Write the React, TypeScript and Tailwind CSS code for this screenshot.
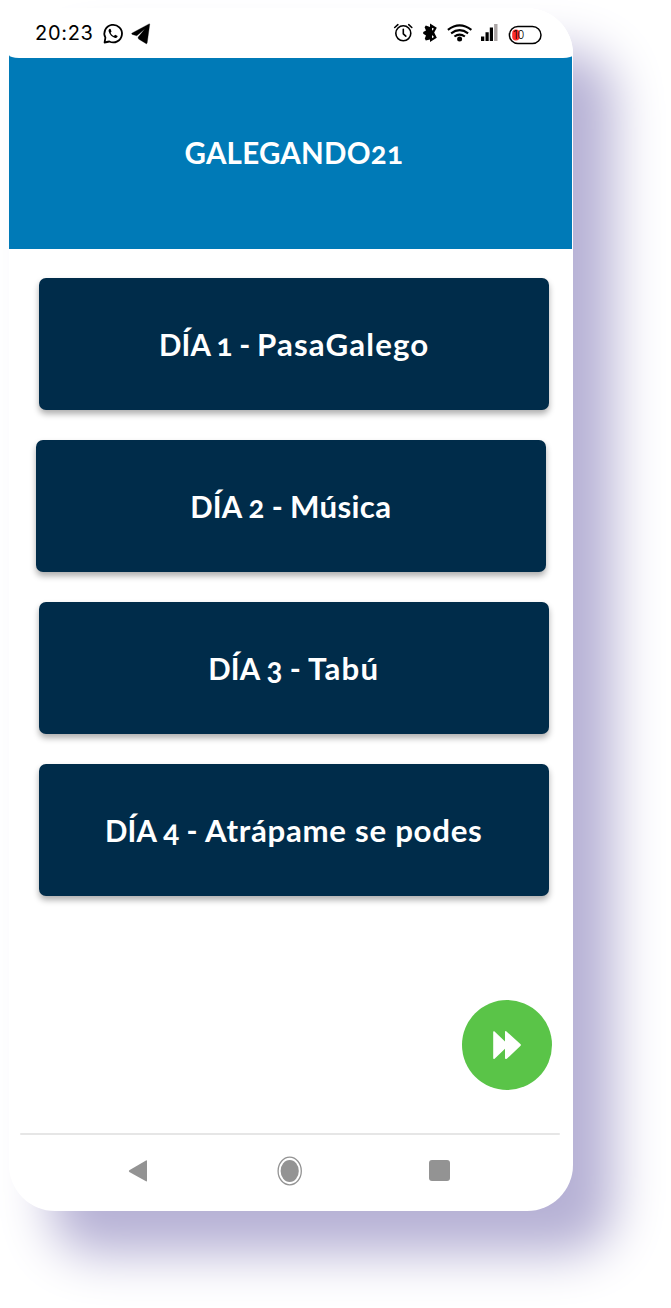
import React from "react";

const days = [
  { prefix: "DÍA 1 -", title: "PasaGalego", place: "ml-[30px] pl-[120px]", prefixWidth: "w-[97.5px] [word-spacing:-0.7px]", spacing: "tracking-[1.05px]" },
  { prefix: "DÍA 2 -", title: "Música", place: "ml-[27px] pl-[154.3px]", prefixWidth: "w-[100px]", spacing: "tracking-[0.3px]" },
  { prefix: "DÍA 3 -", title: "Tabú", place: "ml-[30px] pl-[169.3px]", prefixWidth: "w-[99.5px]", spacing: "tracking-[1.1px]" },
  { prefix: "DÍA 4 -", title: "Atrápame se podes", place: "ml-[30px] pl-[66px]", prefixWidth: "w-[99.7px]", spacing: "tracking-[0.65px]" },
];

function LeftIcons() {
  return (
    <svg width="50" height="24" viewBox="102 21 50 24" aria-hidden="true">
      <path d="M104.6 42.5 L105.4 37.7 A8.8 8.8 0 1 1 109.3 41.5 Z" fill="none" stroke="#000" strokeWidth="1.8" strokeLinejoin="round" />
      <path
        d="M109.8 28.8 C108.6 29.2 108.4 30.5 108.7 31.6 C109.6 34.8 112.2 37.3 115.2 38 C116.6 38.3 117.6 37.3 117.6 36.1 L115.2 34.8 L113.9 35.9 C112.4 35.3 111.2 34.1 110.6 32.7 L111.5 31.5 L110.6 28.9 Z"
        fill="#000"
      />
      <path
        d="M149 23.9 C149.5 23.7 149.8 24 149.7 24.5 L147.2 42.8 C147 43.8 146.4 43.9 145.8 43.4 L138.5 39 L138 37.2 L144.8 29 L136.8 35.8 L132.2 34.4 C131.5 34.1 131.5 33.4 132.2 33 Z"
        fill="#000"
        stroke="#000"
        strokeWidth="0.3"
      />
    </svg>
  );
}

function RightIcons() {
  return (
    <svg width="106" height="24" viewBox="392 21 106 24" aria-hidden="true">
      <g fill="none" stroke="#000" strokeWidth="1.6" strokeLinecap="round" strokeLinejoin="round">
        <circle cx="403.3" cy="33.3" r="7.5" />
        <path d="M403.3 29.2 V33.8 L405.8 36.2" />
        <path d="M394.7 27.5 L397.9 24.7 M408.7 24.7 L411.8 27.5" />
      </g>
      <path
        d="M430 23.6 L436.8 27.8 L434.2 32.6 L436.8 37.8 L430 42 V39.4 L425.8 40.5 L424.8 38.6 L426 35.6 L423.2 33.8 V32 L426 30.6 L424.6 27.3 L425.8 25.5 L430 27 Z"
        fill="#000"
      />
      <path d="M432 27.8 L434 28.8 L432 30.7 Z M432 35 L434 37 L432 38.2 Z" fill="#fff" />
      <g fill="none" stroke="#000" strokeWidth="2.1">
        <path d="M447.9 29.8 Q459.6 20.9 471.4 29.8" />
        <path d="M451.1 33.3 Q459.6 27 468.1 33.3" />
        <path d="M454.4 36.5 Q459.6 32.7 464.9 36.5" />
      </g>
      <circle cx="459.6" cy="39.1" r="2.5" fill="#000" />
      <path d="M481 36.5h3.3V41H481z M485.5 32.2h3.2V41h-3.2z M489.8 27.5h3.2V41h-3.2z" fill="#000" />
      <path d="M494.1 24h3.4v17h-3.4z" fill="#aaa4a4" />
    </svg>
  );
}

export default function App() {
  return (
    <div className="h-[1308px] w-[671px] overflow-hidden bg-white pt-[8px] pl-[9px]">
      <main className="flex h-[1202.5px] w-[564px] flex-col rounded-[46px] bg-white shadow-[41px_43px_50px_0px_#b6b1d5]">
        <div className="z-10 flex h-[50px] shrink-0 items-center rounded-t-[46px] rounded-b-[10px_3px] bg-white pl-[26px]">
          <time className="w-[67px] shrink-0 font-['Inter',sans-serif] text-[20px] leading-[24px] tracking-[0.7px] text-black">20:23</time>
          <LeftIcons />
          <div className="w-[240px] shrink-0" />
          <RightIcons />
          <svg width="34" height="20" viewBox="508 24.5 34 20" className="ml-[10px] mt-[3px] shrink-0">
            <rect x="509.4" y="26" width="31.6" height="17" rx="8.5" fill="#fff" stroke="#000" strokeWidth="1.5" />
            <rect x="512.2" y="29" width="7.4" height="11" rx="3.7" fill="#fb2b2b" />
            <text x="513.2" y="38.4" fontFamily="Inter, sans-serif" fontSize="11" fontWeight="300" fill="#000">10</text>
          </svg>
        </div>

        <header className="-mt-[3px] flex h-[194px] w-[562.7px] shrink-0 items-center justify-center bg-[#007ab7] pt-px pl-[7px]">
          <h1 className="font-['Lato',sans-serif] text-[29.5px] leading-[36px] font-bold tracking-[0.25px] text-white oldstyle-nums">GALEGANDO21</h1>
        </header>

        <section className="mt-[28.5px] flex flex-col gap-[30px]">
          {days.map((day) => (
            <button
              key={day.title}
              className={`flex h-[132px] w-[510px] items-center rounded-[7px] bg-[#002c4a] pt-[2px] text-left font-['Lato',sans-serif] text-[29.5px] leading-[36px] font-bold whitespace-nowrap text-white shadow-[0px_4px_6px_rgba(0,0,0,0.32)] oldstyle-nums ${day.place}`}
            >
              <span className={`shrink-0 tracking-[0.1px] ${day.prefixWidth}`}>{day.prefix}</span>
              <span className={`origin-left scale-x-[1.06] ${day.spacing}`}>{day.title}</span>
            </button>
          ))}
        </section>

        <button className="mt-[104.5px] ml-[453px] flex size-[90px] shrink-0 items-center justify-center rounded-full bg-[#5ac448]" aria-label="Seguinte">
          <svg width="30" height="30" viewBox="0 0 30 30" className="block">
            <path
              d="M1.2 2 Q1.2 .8 2.3 1.3 L13 11.5 V2 Q13 .8 14.2 1.2 L28.6 14.3 Q29.2 15 28.6 15.7 L14.8 28.8 Q13 29.6 13 28 V18.7 L2.6 28.8 Q1.2 29.6 1.2 28 Z"
              fill="#fff"
            />
          </svg>
        </button>

        <div className="mt-[42.5px] ml-[11px] h-[2px] w-[540px] shrink-0 rounded-full bg-[#e6e6e6]" />
        <nav className="mt-[21px] ml-[119px] flex h-[30px] items-center">
          <svg width="20" height="30" viewBox="128 1156 20 30">
            <path d="M146 1160.5 Q147 1160 147 1161 V1180.5 Q147 1181.8 146 1181.3 L129.3 1172 Q128.3 1171 129.3 1170.3 Z" fill="#939393" />
          </svg>
          <svg width="26" height="30" viewBox="0 0 26 30" className="ml-[129px]">
            <ellipse cx="12.7" cy="15" rx="11.6" ry="13.8" fill="none" stroke="#939393" strokeWidth="1.3" />
            <ellipse cx="12.7" cy="15" rx="9.1" ry="11" fill="#939393" />
          </svg>
          <span className="ml-[126px] size-[21px] rounded-[3px] bg-[#939393]" />
        </nav>
      </main>
    </div>
  );
}
